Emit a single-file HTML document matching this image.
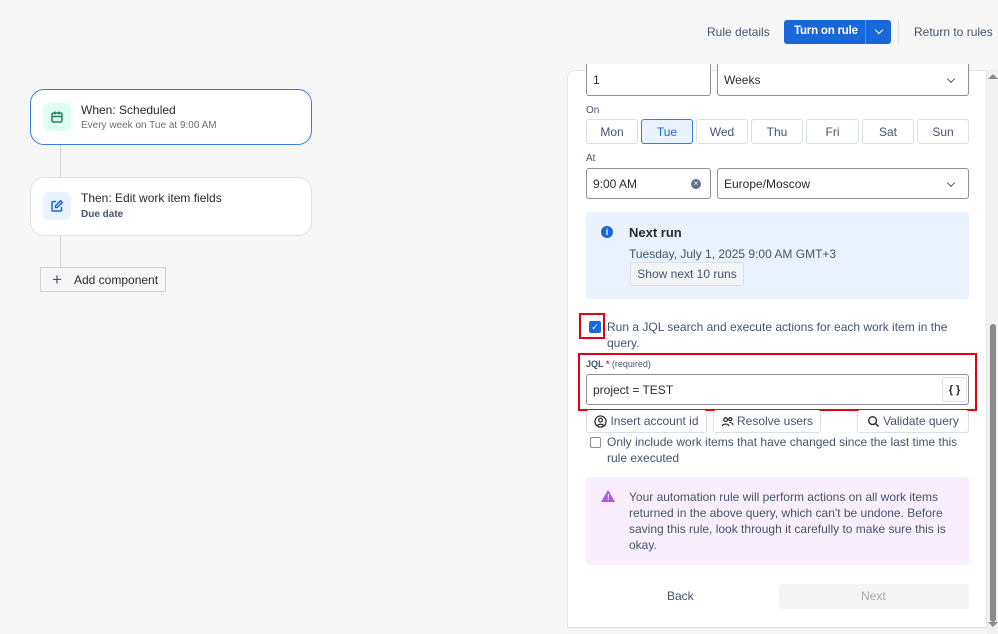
<!DOCTYPE html>
<html><head><meta charset="utf-8"><style>
*{box-sizing:border-box;margin:0;padding:0}
body{width:998px;height:634px;background:#f7f7f7;font-family:"Liberation Sans",sans-serif;color:#292a2e;position:relative;overflow:hidden;font-size:12px}
.a{position:absolute}
.card{position:absolute;background:#fff;border-radius:14px;border:1px solid #dcdfe4}
.ib{position:absolute;width:28px;height:28px;border-radius:6px;display:flex;align-items:center;justify-content:center}
.inp{position:absolute;background:#fff;border:1px solid #8c8f97;border-radius:3px;font-size:12px;padding-left:6px;display:flex;align-items:center}
.day{position:absolute;top:119px;height:25px;border:1px solid #dcdfe4;border-radius:3px;background:#fff;display:flex;align-items:center;justify-content:center;font-size:12px;color:#44546f}
.btn{position:absolute;border:1px solid #dcdfe4;border-radius:3px;background:#fff;display:flex;align-items:center;justify-content:center;font-size:12px;color:#44546f;gap:3px}
.chev{position:absolute;right:14px;top:50%;width:6px;height:6px;border-right:1.5px solid #44546f;border-bottom:1.5px solid #44546f;transform:translateY(-70%) rotate(45deg)}
</style></head><body>
<!-- top bar -->
<div class="a" style="left:707px;top:25px;font-size:12px;color:#44546f">Rule details</div>
<div class="a" style="left:784px;top:20px;width:107px;height:24px;background:#1868db;border-radius:3px"></div>
<div class="a" style="left:794px;top:25px;font-size:11.5px;color:#fff;font-weight:bold;letter-spacing:-0.2px">Turn on rule</div>
<div class="a" style="left:865px;top:20px;width:1px;height:24px;background:#5a8fe6"></div>
<div class="a" style="left:876px;top:27px;width:6px;height:6px;border-right:1.5px solid #fff;border-bottom:1.5px solid #fff;transform:rotate(45deg)"></div>
<div class="a" style="left:898px;top:20px;width:1px;height:25px;background:#dcdfe4"></div>
<div class="a" style="left:914px;top:25px;font-size:12px;color:#44546f">Return to rules</div>

<!-- left flow -->
<div class="a" style="left:60px;top:144px;width:1px;height:130px;background:#cfd1d5"></div>
<div class="card" style="left:30px;top:89px;width:282px;height:56px;border:1.5px solid #357de8"></div>
<div class="ib" style="left:43px;top:103px;background:#dcfff1"><svg width="14" height="14" viewBox="0 0 14 14" fill="none" stroke="#1f845a" stroke-width="1.5"><rect x="2" y="3" width="10" height="9" rx="1.5"/><path d="M2 6.5h10M5 1.5v3M9 1.5v3"/></svg></div>
<div class="a" style="left:81px;top:103px;font-size:12px">When: Scheduled</div>
<div class="a" style="left:81px;top:120px;font-size:10px;color:#6b6e76">Every week on Tue at 9:00 AM</div>
<div class="card" style="left:30px;top:177px;width:282px;height:59px"></div>
<div class="ib" style="left:43px;top:192px;background:#e9f2fe"><svg width="14" height="14" viewBox="0 0 14 14" fill="none" stroke="#1868db" stroke-width="1.5"><path d="M6 2.5H3a1 1 0 0 0-1 1v7.5a1 1 0 0 0 1 1h7.5a1 1 0 0 0 1-1V8"/><path d="M10.5 1.8l1.7 1.7-5 5H5.5V6.8z"/></svg></div>
<div class="a" style="left:81px;top:191px;font-size:12px">Then: Edit work item fields</div>
<div class="a" style="left:81px;top:209px;font-size:10px;color:#44546f;font-weight:bold">Due date</div>
<div class="a" style="left:40px;top:267px;width:126px;height:25px;border:1px solid #cfd1d5;background:#f7f7f7"></div>
<div class="a" style="left:52px;top:270px;font-size:17px;color:#44546f">+</div>
<div class="a" style="left:74px;top:273px;font-size:12px;color:#292a2e">Add component</div>

<!-- right panel -->
<div class="a" style="left:567px;top:70px;width:420px;height:558px;background:#fff;border:1px solid #e6e7ea;border-radius:8px 0 0 0;border-bottom:1px solid #e0e0e0"></div>
<div class="a" style="left:987px;top:70px;width:11px;height:564px;background:#f1f1f1"></div>
<div class="a" style="left:990px;top:324px;width:6px;height:298px;background:#8a8a8a;border-radius:3px"></div>
<div class="a" style="left:988px;top:74px;width:0;height:0;border-left:5px solid transparent;border-right:5px solid transparent;border-bottom:5px solid #8a8a8a"></div>
<div class="a" style="left:988px;top:622px;width:0;height:0;border-left:5px solid transparent;border-right:5px solid transparent;border-top:5px solid #8a8a8a"></div>

<div class="inp" style="left:586px;top:64px;width:125px;height:32px;border-top:none;border-radius:0 0 3px 3px">1</div>
<div class="inp" style="left:717px;top:64px;width:252px;height:32px;border-top:none;border-radius:0 0 3px 3px">Weeks<span class="chev"></span></div>
<div class="a" style="left:586px;top:105px;font-size:10px;color:#44546f">On</div>
<div class="day" style="left:586px;width:52px">Mon</div>
<div class="day" style="left:641px;width:52px;background:#e9f2fe;border-color:#357de8;color:#1868db">Tue</div>
<div class="day" style="left:696px;width:52px">Wed</div>
<div class="day" style="left:751px;width:52px">Thu</div>
<div class="day" style="left:806px;width:53px">Fri</div>
<div class="day" style="left:862px;width:52px">Sat</div>
<div class="day" style="left:917px;width:52px">Sun</div>
<div class="a" style="left:586px;top:153px;font-size:10px;color:#44546f">At</div>
<div class="inp" style="left:586px;top:168px;width:125px;height:31px">9:00 AM<span class="a" style="right:9px;top:10px;width:10px;height:10px;border-radius:50%;background:#626f86;color:#fff;font-size:8px;line-height:10px;text-align:center">×</span></div>
<div class="inp" style="left:717px;top:168px;width:252px;height:31px">Europe/Moscow<span class="chev"></span></div>

<div class="a" style="left:586px;top:212px;width:383px;height:87px;background:#e9f2fe;border-radius:3px"></div>
<div class="a" style="left:601px;top:226px;width:12px;height:12px;border-radius:50%;background:#1868db;color:#fff;font-size:9px;font-weight:bold;text-align:center;line-height:12px">i</div>
<div class="a" style="left:629px;top:225px;font-size:13px;font-weight:bold">Next run</div>
<div class="a" style="left:629px;top:247px;font-size:12px;color:#44546f">Tuesday, July 1, 2025 9:00 AM GMT+3</div>
<div class="btn" style="left:630px;top:262px;width:114px;height:24px;background:#f3f4f6">Show next 10 runs</div>

<div class="a" style="left:579px;top:313px;width:26px;height:26px;border:2px solid #e3000f"></div>
<div class="a" style="left:589px;top:321px;width:12px;height:12px;background:#1868db;border-radius:2px;color:#fff;font-size:9px;line-height:12px;text-align:center">✓</div>
<div class="a" style="left:607px;top:319px;width:345px;font-size:12px;line-height:16px;color:#44546f">Run a JQL search and execute actions for each work item in the query.</div>
<div class="a" style="left:578px;top:353px;width:399px;height:58px;border:2px solid #e3000f"></div>
<div class="a" style="left:586px;top:359px;font-size:9px;color:#44546f;font-weight:bold">JQL <span style="color:#c9372c">*</span> <span style="font-weight:normal">(required)</span></div>
<div class="inp" style="left:586px;top:374px;width:383px;height:31px;font-size:12px">project = TEST</div>
<div class="btn" style="left:942px;top:377px;width:25px;height:25px;font-size:11px;color:#292a2e;font-weight:bold">{ }</div>
<div class="btn" style="left:586px;top:410px;width:121px;height:23px;border-top:none"><svg width="13" height="13" viewBox="0 0 14 14" fill="none" stroke="#292a2e" stroke-width="1.3"><circle cx="7" cy="7" r="6"/><circle cx="7" cy="5.5" r="2"/><path d="M3.5 11.5c1-2 6-2 7 0"/></svg>Insert account id</div>
<div class="btn" style="left:713px;top:410px;width:108px;height:23px;border-top:none"><svg width="13" height="13" viewBox="0 0 14 14" fill="none" stroke="#292a2e" stroke-width="1.3"><circle cx="5" cy="5" r="2"/><circle cx="10" cy="4.5" r="1.7"/><path d="M1.5 12c0-3 7-3 7 0M9 8c2 0 4 1 4 3"/></svg>Resolve users</div>
<div class="btn" style="left:857px;top:410px;width:112px;height:23px;border-top:none"><svg width="13" height="13" viewBox="0 0 14 14" fill="none" stroke="#292a2e" stroke-width="1.5"><circle cx="6" cy="6" r="4.2"/><path d="M9 9l3.5 3.5"/></svg>Validate query</div>
<div class="a" style="left:590px;top:437px;width:11px;height:11px;border:1px solid #8c8f97;border-radius:2px"></div>
<div class="a" style="left:607px;top:434px;width:355px;font-size:12px;line-height:16px;color:#44546f">Only include work items that have changed since the last time this rule executed</div>

<div class="a" style="left:586px;top:477px;width:383px;height:88px;background:#f8eefe;border-radius:3px"></div>
<div class="a" style="left:601px;top:490px;width:0;height:0;border-left:7px solid transparent;border-right:7px solid transparent;border-bottom:12px solid #af59e1"></div>
<div class="a" style="left:607px;top:493px;font-size:8px;color:#fff;font-weight:bold">!</div>
<div class="a" style="left:629px;top:489px;width:330px;font-size:12px;line-height:16px;color:#44546f">Your automation rule will perform actions on all work items returned in the above query, which can't be undone. Before saving this rule, look through it carefully to make sure this is okay.</div>

<div class="a" style="left:667px;top:589px;font-size:12px;color:#44546f">Back</div>
<div class="a" style="left:779px;top:584px;width:190px;height:25px;background:#f5f5f5;border-radius:3px"></div>
<div class="a" style="left:861px;top:589px;font-size:12px;color:#a5a8ae">Next</div>
</body></html>
